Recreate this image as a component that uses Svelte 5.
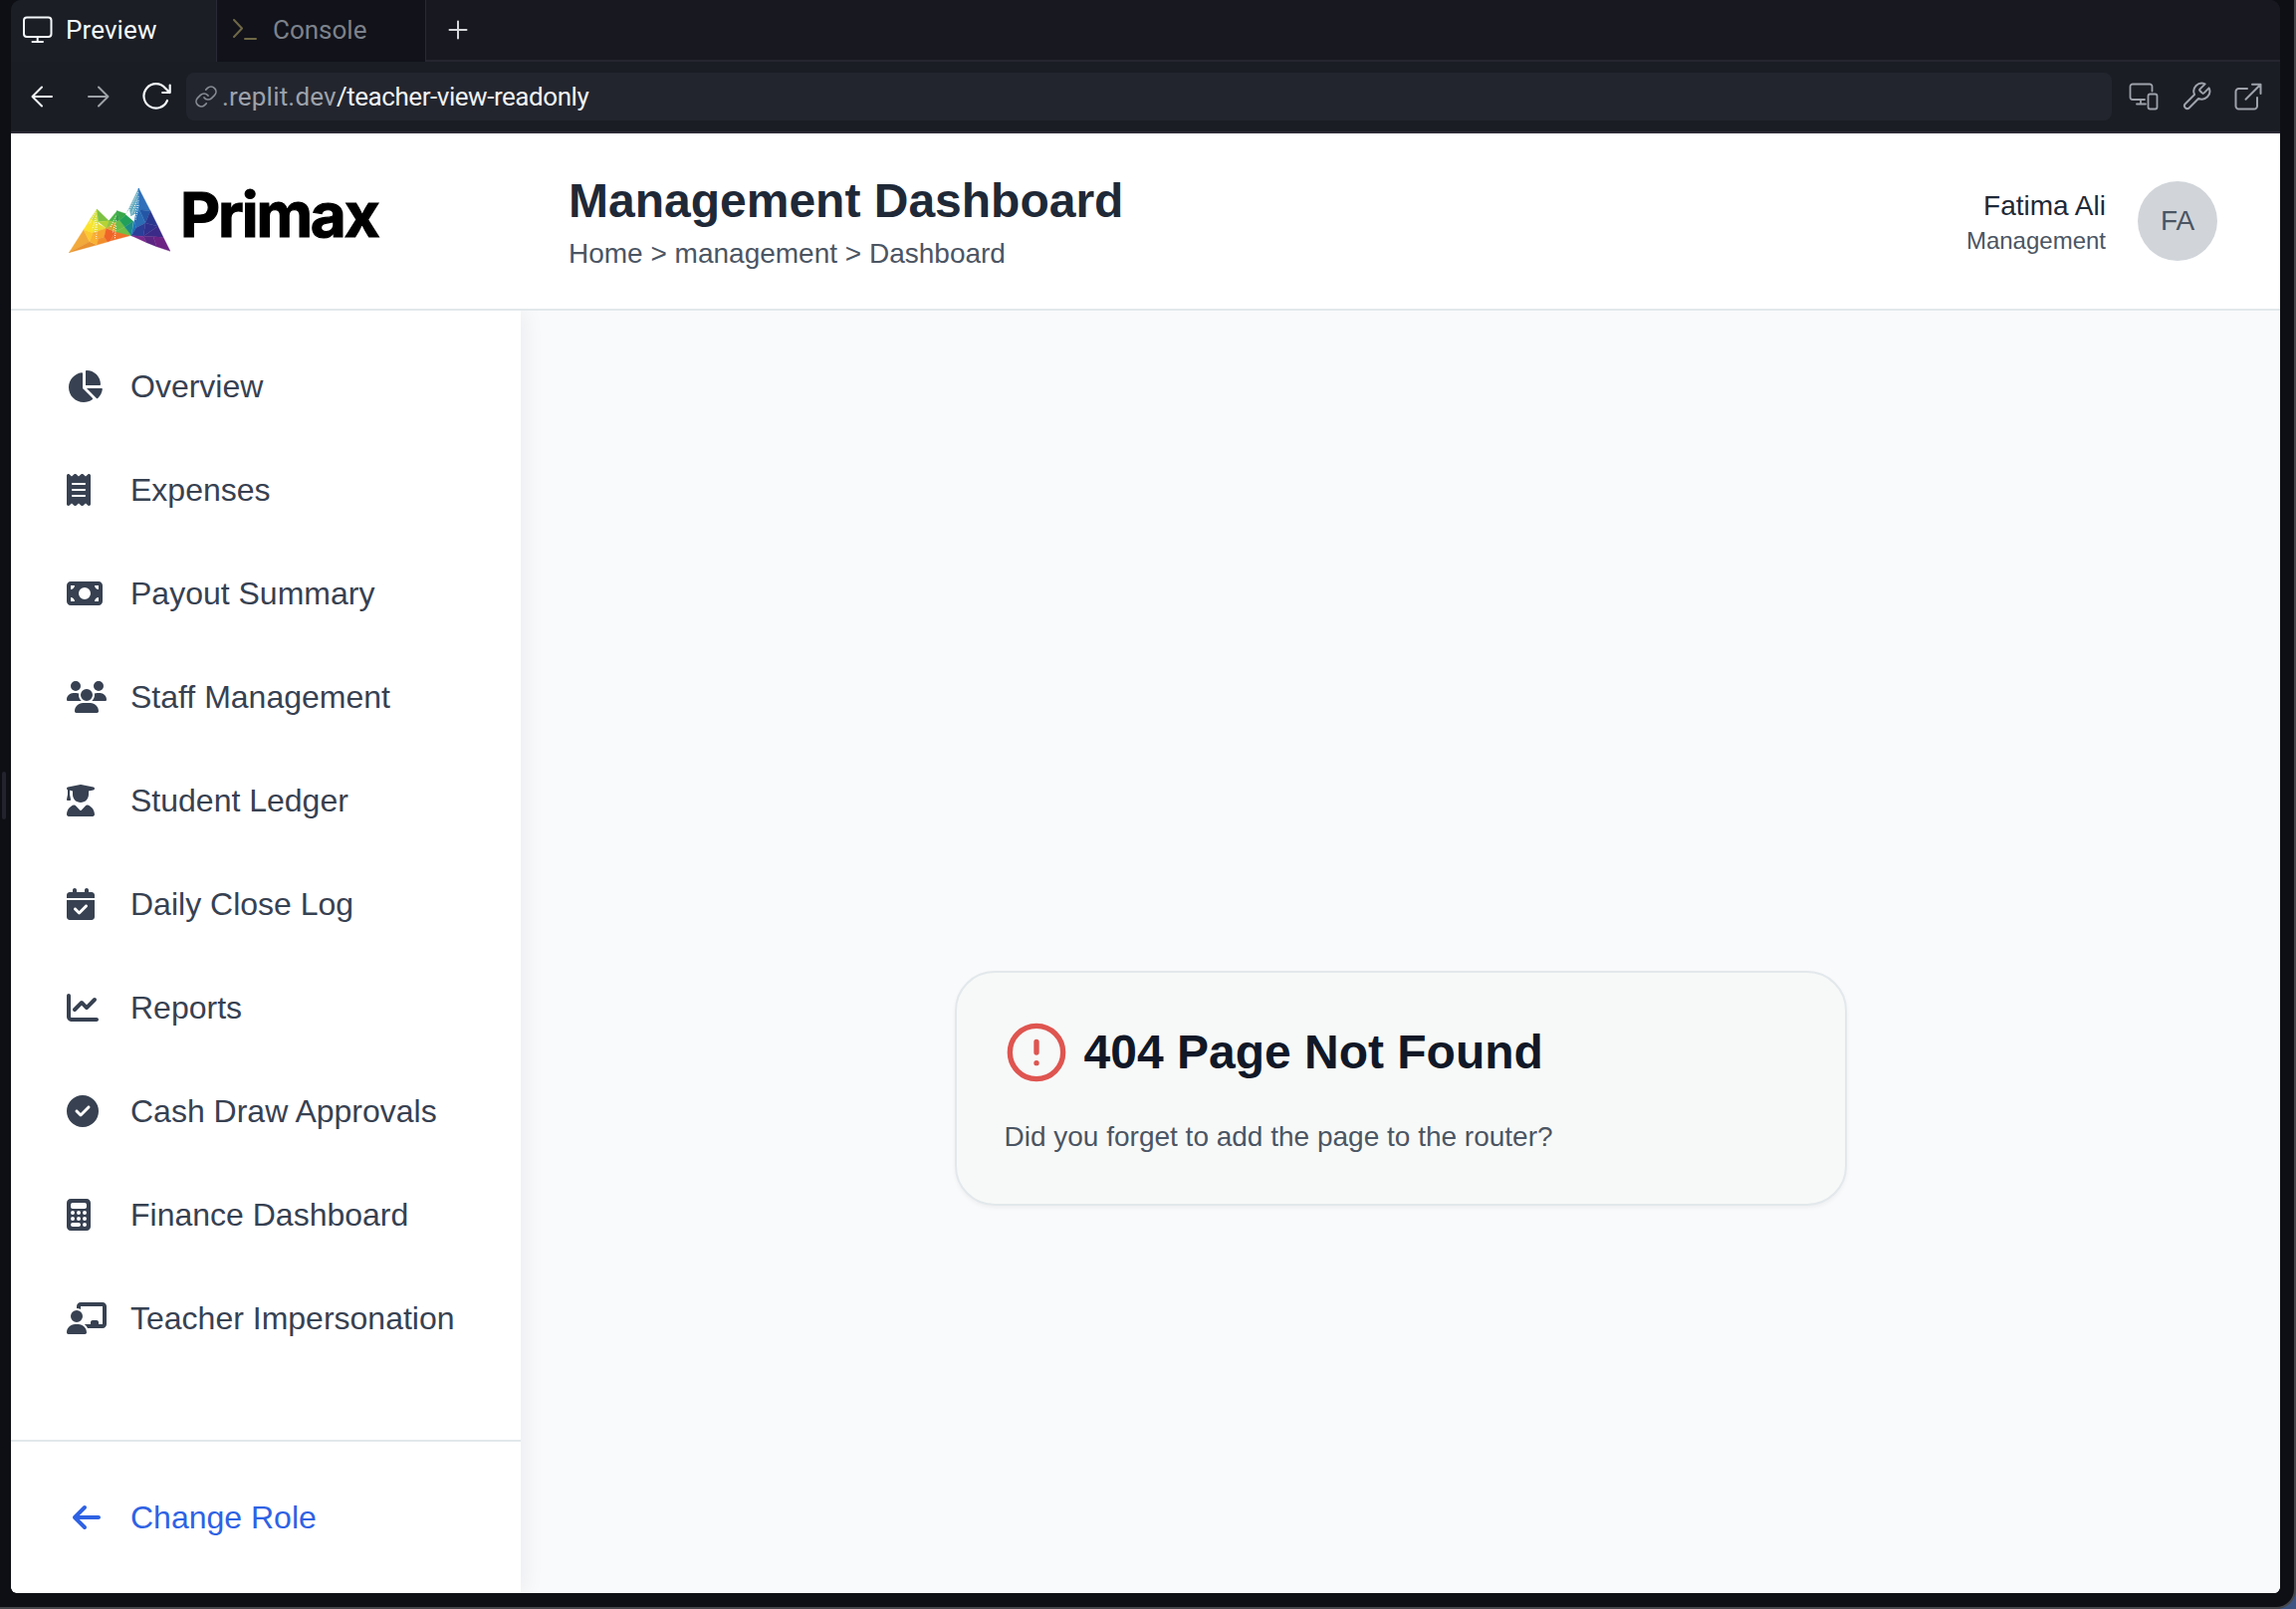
<script>
  const nav = [
    { label: 'Overview', w: 576, d: 'M304 240V16.6c0-9 7-16.6 16-16.6C443.7 0 544 100.3 544 224c0 9-7.6 16-16.6 16H304zM32 272C32 150.7 122.1 50.3 239 34.3c9.2-1.3 17 6.1 17 15.4V288L412.5 444.5c6.7 6.7 6.2 17.7-1.5 23.1C371.8 495.6 323.8 512 272 512C139.5 512 32 404.6 32 272zm526.4 16c9.3 0 16.6 7.8 15.4 17c-7.7 55.9-34.6 105.6-73.9 142.3c-6 5.6-15.4 5.2-21.2-.7L320 288H558.4z' },
    { label: 'Expenses', w: 384, d: 'M14 2.2C22.5-1.7 32.5-.3 39.6 5.8L80 40.4 120.4 5.8c9-7.7 22.3-7.7 31.2 0L192 40.4 232.4 5.8c9-7.7 22.3-7.7 31.2 0L304 40.4 344.4 5.8c7.1-6.1 17.1-7.5 25.6-3.6s14 12.4 14 21.8V488c0 9.4-5.5 17.9-14 21.8s-18.5 2.5-25.6-3.6L304 471.6l-40.4 34.6c-9 7.7-22.3 7.7-31.2 0L192 471.6l-40.4 34.6c-9 7.7-22.3 7.7-31.2 0L80 471.6 39.6 506.2c-7.1 6.1-17.1 7.5-25.6 3.6S0 497.4 0 488V24C0 14.6 5.5 6.1 14 2.2zM96 144c-8.8 0-16 7.2-16 16s7.2 16 16 16H288c8.8 0 16-7.2 16-16s-7.2-16-16-16H96zM80 352c0 8.8 7.2 16 16 16H288c8.8 0 16-7.2 16-16s-7.2-16-16-16H96c-8.8 0-16 7.2-16 16zM96 240c-8.8 0-16 7.2-16 16s7.2 16 16 16H288c8.8 0 16-7.2 16-16s-7.2-16-16-16H96z' },
    { label: 'Payout Summary', w: 576, d: 'M64 64C28.7 64 0 92.7 0 128V384c0 35.3 28.7 64 64 64H512c35.3 0 64-28.7 64-64V128c0-35.3-28.7-64-64-64H64zm64 320H64V320c35.3 0 64 28.7 64 64zM64 192V128h64c0 35.3-28.7 64-64 64zM448 384c0-35.3 28.7-64 64-64v64H448zm64-192c-35.3 0-64-28.7-64-64h64v64zM288 160a96 96 0 1 1 0 192 96 96 0 1 1 0-192z' },
    { label: 'Staff Management', w: 640, d: 'M144 0a80 80 0 1 1 0 160A80 80 0 1 1 144 0zM512 0a80 80 0 1 1 0 160A80 80 0 1 1 512 0zM0 298.7C0 239.8 47.8 192 106.7 192h42.7c15.9 0 31 3.5 44.6 9.7c-1.3 7.2-1.9 14.7-1.9 22.3c0 38.2 16.8 72.5 43.3 96c-.2 0-.4 0-.7 0H21.3C9.6 320 0 310.4 0 298.7zM405.3 320c-.2 0-.4 0-.7 0c26.6-23.5 43.3-57.8 43.3-96c0-7.6-.7-15-1.9-22.3c13.6-6.3 28.7-9.7 44.6-9.7h42.7C592.2 192 640 239.8 640 298.7c0 11.8-9.6 21.3-21.3 21.3H405.3zM224 224a96 96 0 1 1 192 0 96 96 0 1 1 -192 0zM128 485.3C128 411.7 187.7 352 261.3 352H378.7C452.3 352 512 411.7 512 485.3c0 14.7-11.9 26.7-26.7 26.7H154.7c-14.7 0-26.7-11.9-26.7-26.7z' },
    { label: 'Student Ledger', w: 448, d: 'M219.3 .5c3.1-.6 6.3-.6 9.4 0l200 40C439.9 42.7 448 52.6 448 64s-8.1 21.3-19.3 23.5L352 102.9V160c0 70.7-57.3 128-128 128s-128-57.3-128-128V102.9L48 93.3v65.1l15.7 78.4c.9 4.7-.3 9.6-3.3 13.3s-7.6 5.9-12.4 5.9H16c-4.8 0-9.3-2.1-12.4-5.9s-4.3-8.6-3.3-13.3L16 158.4V86.6C6.5 83.3 0 74.3 0 64C0 52.6 8.1 42.7 19.3 40.5l200-40zM111.9 327.7c10.5-3.4 21.8 .4 29.4 8.5l71 75.5c6.3 6.7 17 6.7 23.3 0l71-75.5c7.6-8.1 18.9-11.9 29.4-8.5C401 348.6 448 409.4 448 481.3c0 17-13.8 30.7-30.7 30.7H30.7C13.8 512 0 498.2 0 481.3c0-71.9 47-132.7 111.9-153.6z' },
    { label: 'Daily Close Log', w: 448, d: 'M128 0c17.7 0 32 14.3 32 32V64H288V32c0-17.7 14.3-32 32-32s32 14.3 32 32V64h48c26.5 0 48 21.5 48 48v48H0V112C0 85.5 21.5 64 48 64H96V32c0-17.7 14.3-32 32-32zM0 192H448V464c0 26.5-21.5 48-48 48H48c-26.5 0-48-21.5-48-48V192zM329 305c9.4-9.4 9.4-24.6 0-33.9s-24.6-9.4-33.9 0l-95 95-47-47c-9.4-9.4-24.6-9.4-33.9 0s-9.4 24.6 0 33.9l64 64c9.4 9.4 24.6 9.4 33.9 0L329 305z' },
    { label: 'Reports', w: 512, d: 'M64 64c0-17.7-14.3-32-32-32S0 46.3 0 64V400c0 44.2 35.8 80 80 80H480c17.7 0 32-14.3 32-32s-14.3-32-32-32H80c-8.8 0-16-7.2-16-16V64zm406.6 86.6c12.5-12.5 12.5-32.8 0-45.3s-32.8-12.5-45.3 0L320 210.7l-57.4-57.4c-12.5-12.5-32.8-12.5-45.3 0l-112 112c-12.5 12.5-12.5 32.8 0 45.3s32.8 12.5 45.3 0L240 221.3l57.4 57.4c12.5 12.5 32.8 12.5 45.3 0l128-128z' },
    { label: 'Cash Draw Approvals', w: 512, d: 'M256 512A256 256 0 1 0 256 0a256 256 0 1 0 0 512zM369 209L241 337c-9.4 9.4-24.6 9.4-33.9 0l-64-64c-9.4-9.4-9.4-24.6 0-33.9s24.6-9.4 33.9 0l47 47L335 175c9.4-9.4 24.6-9.4 33.9 0s9.4 24.6 0 33.9z' },
    { label: 'Finance Dashboard', w: 384, d: 'M64 0C28.7 0 0 28.7 0 64V448c0 35.3 28.7 64 64 64H320c35.3 0 64-28.7 64-64V64c0-35.3-28.7-64-64-64H64zM96 64H288c17.7 0 32 14.3 32 32v32c0 17.7-14.3 32-32 32H96c-17.7 0-32-14.3-32-32V96c0-17.7 14.3-32 32-32zm32 160a32 32 0 1 1 -64 0 32 32 0 1 1 64 0zM96 352a32 32 0 1 1 0-64 32 32 0 1 1 0 64zM64 416c0-17.7 14.3-32 32-32h96c17.7 0 32 14.3 32 32s-14.3 32-32 32H96c-17.7 0-32-14.3-32-32zM192 256a32 32 0 1 1 0-64 32 32 0 1 1 0 64zm32 64a32 32 0 1 1 -64 0 32 32 0 1 1 64 0zm64-64a32 32 0 1 1 0-64 32 32 0 1 1 0 64zm32 64a32 32 0 1 1 -64 0 32 32 0 1 1 64 0zM288 448a32 32 0 1 1 0-64 32 32 0 1 1 0 64z' },
    { label: 'Teacher Impersonation', w: 640, d: 'M160 64c0-35.3 28.7-64 64-64H576c35.3 0 64 28.7 64 64V352c0 35.3-28.7 64-64 64H336.8c-11.8-25.5-29.9-47.5-52.4-64H384V320c0-17.7 14.3-32 32-32h64c17.7 0 32 14.3 32 32v32h64V64L224 64v49.1C205.2 102.2 183.3 96 160 96V64zm0 64a96 96 0 1 1 0 192 96 96 0 1 1 0-192zM133.3 352h53.3C260.3 352 320 411.7 320 485.3c0 14.7-11.9 26.7-26.7 26.7H26.7C11.9 512 0 500.1 0 485.3C0 411.7 59.7 352 133.3 352z' }
  ];

  // Coloured facets of the mountain logo
  const facets = [
    ['88,281 132,212 150,248', '#f2a93b'],
    ['88,281 150,248 172,258', '#e8912f'],
    ['132,212 152,180 160,222', '#fbe32d'],
    ['132,212 160,222 150,248', '#fcc92f'],
    ['152,180 172,150 176,196', '#d5e03a'],
    ['152,180 176,196 160,222', '#f3e532'],
    ['172,150 208,185 176,188', '#7cc142'],
    ['176,188 208,185 200,208', '#b5d334'],
    ['160,222 176,194 200,208', '#e9dc33'],
    ['150,248 160,222 176,240 172,258', '#f9b233'],
    ['160,222 200,208 194,234 176,240', '#f6a62f'],
    ['172,258 176,240 194,234 204,249', '#f18e2c'],
    ['200,208 228,218 212,246 204,249 194,234', '#ef6328'],
    ['228,218 248,218 272,230 212,246', '#f0712b'],
    ['208,185 233,155 228,190', '#4cb648'],
    ['208,185 228,190 200,208', '#8dc63f'],
    ['200,208 228,190 228,218', '#d7a832'],
    ['233,155 262,165 240,184', '#37a849'],
    ['233,155 240,184 228,190', '#2f9e48'],
    ['228,190 240,184 256,204 228,218', '#6cbd45'],
    ['240,184 262,165 282,186 256,204', '#21a05a'],
    ['228,218 256,204 276,230 252,224', '#6fbe45'],
    ['256,204 282,186 276,230', '#1b8c84'],
    ['298,87 262,162 284,184', '#69aebe'],
    ['298,87 284,184 300,152', '#2e83c2'],
    ['298,87 300,152 333,155', '#2f6fba'],
    ['300,152 333,155 318,192', '#2357a6'],
    ['284,184 300,152 318,192 290,206', '#2b6db5'],
    ['284,184 290,206 276,230', '#1c74b9'],
    ['333,155 356,202 318,192', '#29378f'],
    ['290,206 318,192 312,232 276,230', '#2a3f98'],
    ['318,192 356,202 312,232', '#30318e'],
    ['356,202 372,235 312,232', '#3b2a87'],
    ['276,230 312,232 322,251', '#7b2a8c'],
    ['312,232 342,233 352,263 322,251', '#5c2583'],
    ['342,233 372,235 393,277 352,263', '#6d2384']
  ];
</script>

{#snippet glyph(w, d)}
  <svg class="glyph" viewBox="0 0 {w} 512" width={w / 16} height="32"><path {d} fill="currentColor" /></svg>
{/snippet}

<div class="desktop">
  <div class="window">
    <div class="handle"></div>
    <div class="pane">
      <div class="tabs">
        <div class="tab active">
          <svg width="30" height="28" viewBox="0 0 30 28" fill="none" stroke="currentColor" stroke-width="2" stroke-linecap="round"><rect x="1" y="1.5" width="27.5" height="19.5" rx="3" /><path d="M14.7 21v5M9.5 26h10.5" /></svg>
          <span class="t-preview">Preview</span>
        </div>
        <div class="tab idle">
          <svg width="26" height="24" viewBox="0 0 26 24" fill="none" stroke="#6f6846" stroke-width="2" stroke-linecap="round" stroke-linejoin="round"><path d="M2 2l8 8.500-8 8.500M13 21h11" /></svg>
          <span class="t-console">Console</span>
        </div>
        <div class="rest">
          <svg width="20" height="20" viewBox="0 0 20 20" stroke="#d5d7da" stroke-width="2" stroke-linecap="round"><path d="M10 1.500v17M1.500 10h17" /></svg>
        </div>
      </div>
      <div class="toolbar">
        <div class="navbtns">
          <svg width="24" height="24" viewBox="0 0 24 24" fill="none" stroke="#f5f9fc" stroke-width="2" stroke-linecap="round" stroke-linejoin="round"><path d="M22 12H2.500M12 2.500L2.500 12l9.500 9.500" /></svg>
          <svg class="fwd" width="24" height="24" viewBox="0 0 24 24" fill="none" stroke="#9da2a6" stroke-width="2" stroke-linecap="round" stroke-linejoin="round"><path d="M2 12h19.500M12 2.500l9.500 9.500-9.500 9.500" /></svg>
          <svg width="32" height="30" viewBox="0 0 32 30" fill="none" stroke="#f5f9fc" stroke-width="2.200" stroke-linecap="round" stroke-linejoin="round"><path d="M27 19a12.200 12.200 0 1 1-2-12.500L29.500 11M29.700 3.500V11h-7.500" /></svg>
        </div>
        <div class="url">
          <svg width="24" height="24" viewBox="0 0 24 24" fill="none" stroke="#868b93" stroke-width="1.700" stroke-linecap="round"><path d="M10 13a5 5 0 0 0 7.540.540l3-3a5 5 0 0 0-7.070-7.070l-1.720 1.710M14 11a5 5 0 0 0-7.540-.540l-3 3a5 5 0 0 0 7.070 7.070l1.710-1.710" /></svg>
          <span class="host">.replit.dev</span><span class="path">/teacher-view-readonly</span>
        </div>
        <div class="tools">
          <svg width="30" height="28" viewBox="0 0 30 28" fill="none" stroke="currentColor" stroke-width="1.800" stroke-linecap="round" stroke-linejoin="round"><path d="M23.500 8.500V4a2.500 2.500 0 0 0-2.500-2.500H4A2.500 2.500 0 0 0 1.500 4v10.500A2.500 2.500 0 0 0 4 17h12M12 17v4.500M8 21.500h9" /><rect x="19.500" y="11.500" width="9" height="15" rx="2" /></svg>
          <svg width="32" height="32" viewBox="0 0 24 24" fill="none" stroke="currentColor" stroke-width="1.500" stroke-linecap="round" stroke-linejoin="round"><path d="M14.700 6.300a1 1 0 0 0 0 1.400l1.600 1.600a1 1 0 0 0 1.400 0l3.770-3.770a6 6 0 0 1-7.940 7.940l-6.910 6.910a2.120 2.120 0 0 1-3-3l6.910-6.910a6 6 0 0 1 7.940-7.940l-3.760 3.760z" /></svg>
          <svg width="28" height="28" viewBox="0 0 28 28" fill="none" stroke="currentColor" stroke-width="2" stroke-linecap="round" stroke-linejoin="round"><path d="M13 6H4.500A3 3 0 0 0 1.500 9v14.500a3 3 0 0 0 3 3H20a3 3 0 0 0 3-3V15M18 1.800h8.500V11M26 2.300L11.500 16.800" /></svg>
        </div>
      </div>

      <div class="page">
        <header>
          <div class="logo">
            <svg class="peaks" width="102" height="65" viewBox="87 87 306 195">
              {#each facets as [points, fill]}
                <polygon {points} {fill} stroke={fill} stroke-width="1" />
              {/each}
              <polygon points="258,166 270,150 274,172 288,164 284,188" fill="#fff" />
              <g stroke="#fff" stroke-width="3" stroke-dasharray="3 4" fill="none">
                <path d="M296 100L268 156M297 112L276 166M297 124L284 172M297 138L288 184" />
                <path d="M168 160L148 196M170 170L160 206M171 182L166 220M172 196L170 240" />
                <path d="M230 170L212 206M230 184L220 220M230 200L226 238" />
              </g>
            </svg>
            <span class="wordmark">Primax</span>
          </div>
          <div class="heading">
            <h1>Management Dashboard</h1>
            <p>Home &gt; management &gt; Dashboard</p>
          </div>
          <div class="user">
            <div class="who">
              <span class="name">Fatima Ali</span>
              <span class="role">Management</span>
            </div>
            <div class="avatar">FA</div>
          </div>
        </header>
        <div class="body">
          <aside>
            <nav>
              {#each nav as item}
                <a href="#top"><span class="ico">{@render glyph(item.w, item.d)}</span><span>{item.label}</span></a>
              {/each}
            </nav>
            <div class="foot">
              <a href="#top" class="change"><span class="ico fixed">{@render glyph(448, 'M9.4 233.4c-12.5 12.5-12.5 32.8 0 45.3l160 160c12.5 12.5 32.8 12.5 45.3 0s12.5-32.8 0-45.3L109.2 288 416 288c17.7 0 32-14.3 32-32s-14.3-32-32-32l-306.7 0L214.6 118.6c12.5-12.5 12.500-32.800 0-45.300s-32.800-12.500-45.300 0l-160 160z')}</span><span>Change Role</span></a>
            </div>
          </aside>
          <main>
            <div class="center">
              <section class="card">
                <div class="card-head">
                  <svg width="64" height="64" viewBox="0 0 24 24" fill="none" stroke="#df5550" stroke-width="2" stroke-linecap="round"><circle cx="12" cy="12" r="10" /><path d="M12 8v4M12 16h.01" /></svg>
                  <h2>404 Page Not Found</h2>
                </div>
                <p>Did you forget to add the page to the router?</p>
              </section>
            </div>
          </main>
        </div>
      </div>
    </div>
  </div>
</div>

<style>
  :global(body) { overflow: hidden; }
  .desktop { width: 2306px; height: 1616px; background: #3d5582; font-family: "Liberation Sans", Arial, sans-serif; overflow: hidden; }
  .desktop * { box-sizing: border-box; }
  .window {
    position: relative; width: 2306px; height: 1616px; padding: 0 14px 14px 11px;
    background: #0e0f14; border: solid #46474b; border-width: 0 2px 2px 0; border-bottom-right-radius: 20px;
  }
  .handle { position: absolute; left: 2px; top: 775px; width: 4px; height: 48px; border-radius: 2px; background: #22232d; }
  .pane { display: flex; flex-direction: column; width: 2279px; height: 1600px; overflow: hidden; border-radius: 10px 10px 6px 6px; background: #1b1d25; }

  .tabs { display: flex; height: 62px; flex: none; font-family: Roboto, sans-serif; font-size: 26px; line-height: 60px; }
  .tab { display: flex; align-items: center; padding-bottom: 2px; }
  .tab svg { flex: none; }
  .active { width: 206px; padding-left: 12px; gap: 13px; color: #f5f9fc; background: #1b1e25; }
  .idle { width: 211px; padding-left: 15px; gap: 15px; color: #7d828b; background: #11121a; border: solid #282934; border-width: 0 1px; }
  .t-preview { letter-spacing: .1px; }
  .t-console { letter-spacing: 0; }
  .rest { flex: 1; display: flex; align-items: center; padding-left: 22px; background: #181820; border-bottom: 2px solid #24252f; }

  .toolbar { display: flex; align-items: center; height: 72px; flex: none; padding: 0 18px 0 19px; background: #1b1d25; border-bottom: 2px solid #2a2a34; }
  .navbtns { display: flex; align-items: center; width: 157px; }
  .navbtns svg { flex: none; }
  .fwd { margin: 0 30px 0 33px; }
  .url { display: flex; align-items: center; flex: 1; height: 48px; padding-left: 8px; border-radius: 8px; background: #23252e; font: 26px/48px Roboto, sans-serif; }
  .url svg { margin-right: 4px; flex: none; }
  .host { color: #9da2ab; letter-spacing: .2px; }
  .path { color: #f0f2f5; letter-spacing: -.45px; }
  .tools { display: flex; align-items: center; justify-content: space-between; width: 134px; margin-left: 17px; color: #9ea2aa; }

  .page { flex: 1; display: flex; flex-direction: column; min-height: 0; background: #fff; border-radius: 0 0 6px 6px; overflow: hidden; }
  header { position: relative; z-index: 2; display: flex; align-items: center; flex: none; height: 178px; padding: 0 63px 0 58px; border-bottom: 2px solid #e2e8eb; background: #fff; }
  .logo { display: flex; align-items: flex-end; width: 502px; height: 65px; margin-bottom: 2px; }
  .wordmark { margin: 0 0 16px 10px; font: 700 62px/45px Inter, sans-serif; letter-spacing: -2.1px; color: #000; -webkit-text-stroke: 1.2px #000; }
  .heading { flex: 1; }
  h1, h2, p { margin: 0; }
  h1 { font-size: 48px; line-height: 64px; font-weight: 700; color: #1f2937; }
  .heading p { padding-top: 1px; font-size: 28px; line-height: 39px; color: #4b5563; }
  .user { display: flex; align-items: center; gap: 32px; }
  .who { display: flex; flex-direction: column; align-items: flex-end; }
  .name { padding-top: 2px; font-size: 28px; line-height: 38px; color: #1f2937; }
  .role { font-size: 24px; line-height: 32px; color: #4b5563; }
  .avatar { display: grid; place-items: center; width: 80px; height: 80px; border-radius: 50%; background: #d1d5da; color: #4b5563; font-size: 28px; }

  .body { flex: 1; display: flex; min-height: 0; }
  aside { position: relative; z-index: 1; display: flex; flex-direction: column; width: 512px; flex: none; background: #fff; box-shadow: 4px 0 20px rgba(15, 23, 42, .06); }
  nav { flex: 1; padding-top: 24px; }
  a { display: flex; align-items: center; height: 104px; padding-left: 56px; font-size: 32px; color: #374151; text-decoration: none; white-space: nowrap; }
  .ico { display: flex; width: 64px; }
  .fixed { padding-left: 6px; }
  .foot { height: 154px; padding-top: 24px; border-top: 2px solid #e2e8eb; }
  .change { color: #2f62e4; }
  main { flex: 1; padding: 48px; background: #f9fafc; overflow: hidden; }
  .center { display: flex; align-items: center; justify-content: center; height: 1466px; }
  .card { width: 896px; padding: 48px; border: 2px solid #e2e8eb; border-radius: 40px; background: #f7f9f8; box-shadow: 0 2px 4px rgba(0, 0, 0, .05); }
  .card-head { display: flex; align-items: center; gap: 16px; height: 64px; }
  h2 { font-size: 48px; line-height: 64px; color: #111827; }
  .card p { margin-top: 33px; font-size: 28px; line-height: 39px; color: #4b5563; }
</style>
